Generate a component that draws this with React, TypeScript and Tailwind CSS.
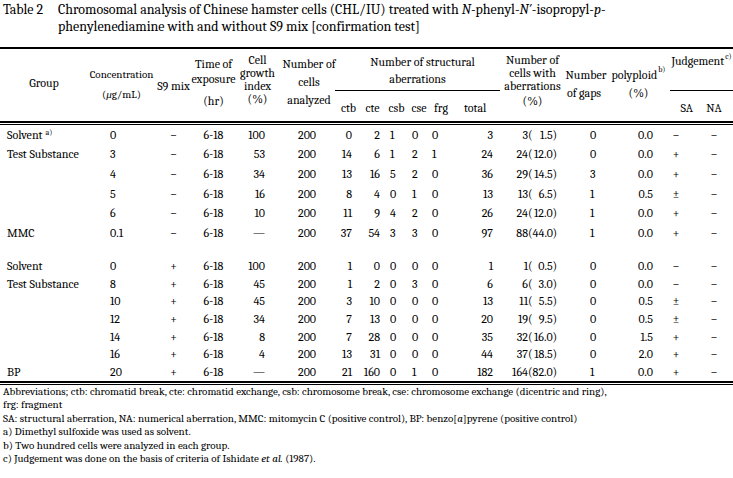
import React from "react";

type R = {
  g?: string; sup?: string; c: string; s9: string; cg: string;
  ctb: string; cte: string; csb: string; cse: string; frg: string; total: string;
  ab: string; pct: string; gaps: string; poly: string; sa: string; na: string;
};

const rows1: R[] = [
  { g: "Solvent", sup: "a)", c: "0", s9: "–", cg: "100", ctb: "0", cte: "2", csb: "1", cse: "0", frg: "0", total: "3", ab: "3", pct: "1.5", gaps: "0", poly: "0.0", sa: "–", na: "–" },
  { g: "Test Substance", c: "3", s9: "–", cg: "53", ctb: "14", cte: "6", csb: "1", cse: "2", frg: "1", total: "24", ab: "24", pct: "12.0", gaps: "0", poly: "0.0", sa: "+", na: "–" },
  { c: "4", s9: "–", cg: "34", ctb: "13", cte: "16", csb: "5", cse: "2", frg: "0", total: "36", ab: "29", pct: "14.5", gaps: "3", poly: "0.0", sa: "+", na: "–" },
  { c: "5", s9: "–", cg: "16", ctb: "8", cte: "4", csb: "0", cse: "1", frg: "0", total: "13", ab: "13", pct: "6.5", gaps: "1", poly: "0.5", sa: "±", na: "–" },
  { c: "6", s9: "–", cg: "10", ctb: "11", cte: "9", csb: "4", cse: "2", frg: "0", total: "26", ab: "24", pct: "12.0", gaps: "1", poly: "0.0", sa: "+", na: "–" },
  { g: "MMC", c: "0.1", s9: "–", cg: "—", ctb: "37", cte: "54", csb: "3", cse: "3", frg: "0", total: "97", ab: "88", pct: "44.0", gaps: "1", poly: "0.0", sa: "+", na: "–" },
];

const rows2: R[] = [
  { g: "Solvent", c: "0", s9: "+", cg: "100", ctb: "1", cte: "0", csb: "0", cse: "0", frg: "0", total: "1", ab: "1", pct: "0.5", gaps: "0", poly: "0.0", sa: "–", na: "–" },
  { g: "Test Substance", c: "8", s9: "+", cg: "45", ctb: "1", cte: "2", csb: "0", cse: "3", frg: "0", total: "6", ab: "6", pct: "3.0", gaps: "0", poly: "0.0", sa: "–", na: "–" },
  { c: "10", s9: "+", cg: "45", ctb: "3", cte: "10", csb: "0", cse: "0", frg: "0", total: "13", ab: "11", pct: "5.5", gaps: "0", poly: "0.5", sa: "±", na: "–" },
  { c: "12", s9: "+", cg: "34", ctb: "7", cte: "13", csb: "0", cse: "0", frg: "0", total: "20", ab: "19", pct: "9.5", gaps: "0", poly: "0.5", sa: "±", na: "–" },
  { c: "14", s9: "+", cg: "8", ctb: "7", cte: "28", csb: "0", cse: "0", frg: "0", total: "35", ab: "32", pct: "16.0", gaps: "0", poly: "1.5", sa: "+", na: "–" },
  { c: "16", s9: "+", cg: "4", ctb: "13", cte: "31", csb: "0", cse: "0", frg: "0", total: "44", ab: "37", pct: "18.5", gaps: "0", poly: "2.0", sa: "+", na: "–" },
  { g: "BP", c: "20", s9: "+", cg: "—", ctb: "21", cte: "160", csb: "0", cse: "1", frg: "0", total: "182", ab: "164", pct: "82.0", gaps: "1", poly: "0.0", sa: "+", na: "–" },
];

const COLS =
  "grid grid-cols-[88px_67px_37px_43px_45px_58px_22px_25px_23px_22px_22px_48px_65px_45px_55px_30px_38px]";

function Row({ r, h }: { r: R; h: string }) {
  return (
    <div className={COLS + " items-center text-[12px] leading-none whitespace-nowrap " + h}>
      <div className="pl-[7px]">
        {r.g}
        {r.sup && <span className="ml-[3px] align-top text-[8px] leading-none">{r.sup}</span>}
      </div>
      <div className="pl-[22px]">{r.c}</div>
      <div className="text-center">{r.s9}</div>
      <div className="text-center">6-18</div>
      <div className="pr-[15px] text-right">{r.cg}</div>
      <div className="pl-[18px]">200</div>
      <div className="pr-[8px] text-right">{r.ctb}</div>
      <div className="pr-[5px] text-right">{r.cte}</div>
      <div className="pl-[5px]">{r.csb}</div>
      <div className="pl-[4px]">{r.cse}</div>
      <div className="pl-[2px]">{r.frg}</div>
      <div className="pr-[7px] text-right">{r.total}</div>
      <div className="flex">
        <span className="w-[28px] text-right">{r.ab}</span>
        <span>(</span>
        <span className="w-[20px] text-right">{r.pct}</span>
        <span>)</span>
      </div>
      <div className="pl-[25px]">{r.gaps}</div>
      <div className="pr-[12px] text-right">{r.poly}</div>
      <div className="pr-[8px] text-center">{r.sa}</div>
      <div className="text-center">{r.na}</div>
    </div>
  );
}

export default function App() {
  return (
    <div className="h-[478px] w-[733px] overflow-hidden bg-white font-serif text-black">
      {/* Title */}
      <div className="pt-[1px] text-[14px] leading-[17px]">
        <div className="flex whitespace-nowrap">
          <span className="w-[58px] pl-[3px]">Table 2</span>
          <span>
            Chromosomal analysis of Chinese hamster cells (CHL/IU) treated with <i>N</i>-phenyl-<i>N′</i>-isopropyl-<i>p</i>-
          </span>
        </div>
        <div className="pl-[58px] whitespace-nowrap">phenylenediamine with and without S9 mix [confirmation test]</div>
      </div>

      <div className="mt-[12px] h-[2px] bg-black" />

      {/* Header */}
      <div className={COLS + " grid-rows-[42px_30px] text-[12px] whitespace-nowrap"}>
        <div className="row-span-2 flex items-center justify-center pb-[4px]">Group</div>
        <div className="row-span-2 flex flex-col items-center pt-[16px] text-[11px] leading-[20px]">
          <span>Concentration</span>
          <span>(<i>μ</i>g/mL)</span>
        </div>
        <div className="row-span-2 flex items-center justify-center pt-[2px]">S9 mix</div>
        <div className="row-span-2 flex flex-col items-center pt-[8px] leading-[15px]">
          <span>Time of</span>
          <span>exposure</span>
          <span className="mt-[7px]">(hr)</span>
        </div>
        <div className="row-span-2 flex flex-col items-center pt-[5px] leading-[13px]">
          <span>Cell</span>
          <span>growth</span>
          <span>index</span>
          <span>(%)</span>
        </div>
        <div className="row-span-2 flex flex-col items-center pt-[6px] leading-[18px]">
          <span>Number of</span>
          <span>cells</span>
          <span>analyzed</span>
        </div>
        <div className="col-span-6 -ml-[3px] flex flex-col items-center border-b border-black pt-[5px] leading-[17px]">
          <span className="pl-[10px]">Number of structural</span>
          <span>aberrations</span>
        </div>
        <div className="row-span-2 flex flex-col items-center pt-[5px] leading-[13px]">
          <span>Number of</span>
          <span>cells with</span>
          <span>aberrations</span>
          <span className="mt-[2px]">(%)</span>
        </div>
        <div className="row-span-2 flex flex-col items-center pt-[17px] pr-[3px] leading-[18px]">
          <span>Number</span>
          <span className="pr-[4px]">of gaps</span>
        </div>
        <div className="row-span-2 flex flex-col items-center pt-[17px] pl-[2px] leading-[18px]">
          <span>
            polyploid<span className="ml-[1px] align-top text-[8px] leading-none">b)</span>
          </span>
          <span>(%)</span>
        </div>
        <div className="col-span-2 ml-[5px] flex flex-col items-center border-b border-black pt-[4px] leading-[16px]">
          <span>
            Judgement<span className="ml-[1px] align-top text-[8px] leading-none">c)</span>
          </span>
        </div>
        <div className="flex items-center justify-end pt-[3px] pr-[4px]">ctb</div>
        <div className="flex items-center justify-center pt-[3px]">cte</div>
        <div className="flex items-center justify-center pt-[3px]">csb</div>
        <div className="flex items-center justify-center pt-[3px]">cse</div>
        <div className="flex items-center justify-center pt-[3px]">frg</div>
        <div className="flex items-center justify-start pt-[3px] pl-[12px]">total</div>
        <div className="flex items-center justify-end pt-[3px] pr-[2px]">SA</div>
        <div className="flex items-center justify-center pt-[3px]">NA</div>
      </div>

      <div className="h-[2px] bg-black" />
      <div className="mt-[1px] h-[1px] bg-black" />

      {/* Body */}
      <div>
        {rows1.map((r, i) => (
          <Row key={"a" + i} r={r} h="h-[19.6px]" />
        ))}
        <div className="h-[14.5px]" />
        {rows2.map((r, i) => (
          <Row key={"b" + i} r={r} h="h-[17.7px]" />
        ))}
      </div>

      <div className="h-[2px] bg-black" />
      <div className="mt-[1px] h-[1px] bg-black" />

      {/* Footnotes */}
      <div className="pl-[3px] text-[11px] leading-[13.5px] whitespace-nowrap">
        <div>Abbreviations; ctb: chromatid break, cte: chromatid exchange, csb: chromosome break, cse: chromosome exchange (dicentric and ring),</div>
        <div>frg: fragment</div>
        <div>SA: structural aberration, NA: numerical aberration, MMC: mitomycin C (positive control), BP: benzo[<i>a</i>]pyrene (positive control)</div>
        <div>a) Dimethyl sulfoxide was used as solvent.</div>
        <div>b) Two hundred cells were analyzed in each group.</div>
        <div>
          c) Judgement was done on the basis of criteria of Ishidate <i>et al.</i> (1987).
        </div>
      </div>
    </div>
  );
}
